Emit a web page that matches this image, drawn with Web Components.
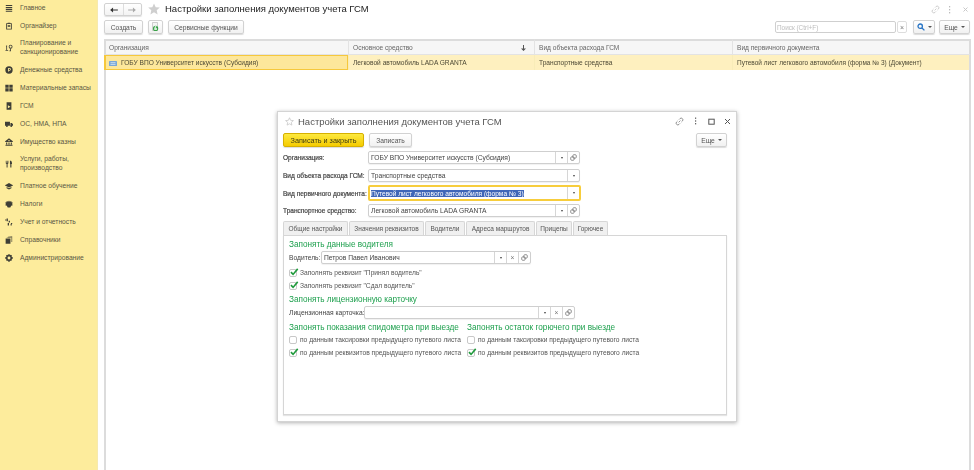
<!DOCTYPE html>
<html lang="ru">
<head>
<meta charset="utf-8">
<title>Настройки заполнения документов учета ГСМ</title>
<style>
    html, body { margin: 0; height: 100%; background: #fff; overflow: hidden; }
    body { font: 6.7px "Liberation Sans", Arial, sans-serif; color: #4a4a4a; }
</style>
</head>
<body>
<app-shell>
    <side-nav slot="nav">
        <nav-item icon="menu">Главное</nav-item>
        <nav-item icon="note">Органайзер</nav-item>
        <nav-item icon="plan" tall>Планирование и<br>санкционирование</nav-item>
        <nav-item icon="coin">Денежные средства</nav-item>
        <nav-item icon="grid">Материальные запасы</nav-item>
        <nav-item icon="fuel">ГСМ</nav-item>
        <nav-item icon="truck">ОС, НМА, НПА</nav-item>
        <nav-item icon="house">Имущество казны</nav-item>
        <nav-item icon="tools" tall>Услуги, работы,<br>производство</nav-item>
        <nav-item icon="cap">Платное обучение</nav-item>
        <nav-item icon="tax">Налоги</nav-item>
        <nav-item icon="report">Учет и отчетность</nav-item>
        <nav-item icon="books">Справочники</nav-item>
        <nav-item icon="gear">Администрирование</nav-item>
    </side-nav>
    <list-page slot="main"></list-page>
    <settings-dialog slot="main"></settings-dialog>
</app-shell>

<script>
const ICONS = {
    menu: '<path d="M1 1.2h8v1.4H1zM1 3.6h8V5H1zM1 6h8v1.4H1zM1 8.4h8v1.2H1z"/>',
    note: '<path fill-rule="evenodd" d="M1.5 1.5h7v8h-7zM2.6 2.6v5.8h4.8V2.6z"/><path d="M3.4 .8h3.2v1.4H3.4zM3.4 3.8h3.2v.8H3.4zM3.4 5.4h3.2v.8H3.4z"/>',
    plan: '<path d="M1 2.5l1.6-1v6H4v1H.6v-1h1V3z"/><path fill-rule="evenodd" d="M7 1a2.4 2.4 0 1 1 0 4.8A2.4 2.4 0 0 1 7 1zm0 1a1.4 1.4 0 1 0 0 2.8A1.4 1.4 0 0 0 7 2z"/><path d="M6.5 5.6h1V9h-2V8h1z"/>',
    coin: '<path fill-rule="evenodd" d="M5 .4a4.6 4.6 0 1 1 0 9.2A4.6 4.6 0 0 1 5 .4zM3.9 2.6V7H5V5.8h.7a1.6 1.6 0 0 0 0-3.2zM5 3.5h.6a.7.7 0 0 1 0 1.4H5z"/>',
    grid: '<path d="M.4.8h4.2v4H.4zM5.4.8h4.2v4H5.4zM.4 5.4h4.2v4H.4zM5.4 5.4h4.2v4H5.4z"/>',
    fuel: '<path fill-rule="evenodd" d="M2 .4h6v9.4H2zM3.6 4v3.8L6.8 6z"/>',
    truck: '<path d="M0 2.2h6.2v5H0zM6.8 3.6h1.8L10 5.4v1.8H6.8z"/><circle cx="2.4" cy="7.6" r="1.2"/><circle cx="7.8" cy="7.6" r="1.2"/>',
    house: '<path fill-rule="evenodd" d="M5 .4l4.8 3.6v1H.2V4zM5 2.4a.9.9 0 1 0 0 1.8.9.9 0 0 0 0-1.8z"/><path d="M1.4 5.6h1.4v2.4H1.4zM4.3 5.6h1.4v2.4H4.3zM7.2 5.6h1.4v2.4H7.2zM.6 8.4h8.8v1.2H.6z"/>',
    tools: '<path d="M1 .8h.7v2.6h.6V.8H3v2.6h.5V.8h.7v3.6l-1 .7v4.3H2V5.1l-1-.7zM6.2.8h1.2c1 .6 1.4 2 1.4 4.2H8v4.4H6.6V5H6.2z"/>',
    cap: '<path d="M5 1.4l5.4 2.8L5 7 -.4 4.2z"/><path d="M2 6.2L5 7.8l3-1.6v1.7L5 9.4 2 7.9z"/>',
    tax: '<path d="M5 .6l1 1.6 1.8-1 .3 1.6 1.6.3-.8 1.8.8 1.6-2 .7L6.6 9.4H3.4L2.3 7.2l-2-.7.8-1.6-.8-1.8 1.6-.3L2.2 1.2l1.8 1z"/>',
    report: '<path d="M2 .6h1.6v3.6H2zM.2 1.8h1.4v1.2H.2zM4.6 3.4h1.6v2.2H4.6zM3.4 6.2h1.6v3.2H3.4zM7.4 6.4H9v1.2H7.4zM7 7.6h1.4v1.8H7z"/>',
    books: '<path d="M3.6.8L9 .4v7l-1 .2V2H3.6z" opacity=".75"/><path d="M2.2 1.8h5v.8h-5z" opacity=".6"/><path d="M.8 3.2h6v6.4h-6z"/>',
    gear: '<path fill-rule="evenodd" d="M4.1.2h1.8l.3 1.4 1.2-.6 1.4 1.3-.7 1.2 1.6.5v1.9l-1.6.5.7 1.2-1.4 1.3-1.2-.7-.3 1.6H4.1l-.3-1.6-1.2.7-1.4-1.3.7-1.2L.3 5.9V4l1.6-.5-.7-1.2L2.6 1l1.2.6zM5 3.2a1.8 1.8 0 1 0 0 3.6 1.8 1.8 0 0 0 0-3.6z"/>'
};

class AppShell extends HTMLElement {
    constructor() {
        super();
        this.attachShadow({ mode: 'open' });
        this.shadowRoot.innerHTML = `
            <style>
                :host { display: grid; grid-template-columns: 98px 1fr; width: 974px; height: 470px; overflow: hidden; filter: blur(.4px); }
                .main { position: relative; padding-left: 6px; min-width: 0; }
            </style>
            <slot name="nav"></slot>
            <div class="main"><slot name="main"></slot></div>
        `;
    }
}

class SideNav extends HTMLElement {
    constructor() {
        super();
        this.attachShadow({ mode: 'open' });
        this.shadowRoot.innerHTML = `
            <style>
                :host { display: block; background: #fdec9c; border-right: 1px solid #f6e9ae; box-sizing: border-box; height: 470px; }
                .inner { display: flex; flex-direction: column; margin-top: -1px; }
            </style>
            <div class="inner"><slot></slot></div>
        `;
    }
}

class NavItem extends HTMLElement {
    constructor() {
        super();
        this.attachShadow({ mode: 'open' });
        const tall = this.hasAttribute('tall');
        const icon = ICONS[this.getAttribute('icon')] || '';
        this.shadowRoot.innerHTML = `
            <style>
                :host { display: flex; align-items: center; gap: 7px; height: ${tall ? 26 : 18}px; padding-left: 5px; color: #5a5744; font-size: 6.7px; line-height: 8.6px; white-space: nowrap; }
                svg { width: 8px; height: 8px; flex: none; fill: #3e3e36; }
            </style>
            <svg viewBox="0 0 10 10">${icon}</svg>
            <span><slot></slot></span>
        `;
    }
}

class FlatButton extends HTMLElement {
    constructor() {
        super();
        this.attachShadow({ mode: 'open' });
        this.shadowRoot.innerHTML = `
            <style>
                :host { display: inline-flex; align-items: center; justify-content: center; gap: 3px; flex: none; box-sizing: border-box; height: 14px; border: 1px solid #d2d2d2; border-radius: 2px; background: linear-gradient(#fff, #f1f1f1); box-shadow: 0 1px 1px rgba(0,0,0,.14); color: #555; font-size: 6.7px; white-space: nowrap; }
                :host([primary]) { background: linear-gradient(#fde93f, #f5cb00); border-color: #d6b000; color: #3f3a10; font-size: 7.25px; }
                :host([menu])::after { content: ""; border: 2px solid transparent; border-top: 2.5px solid #555; border-bottom: 0; }
            </style>
            <slot></slot>
        `;
    }
}

class ListPage extends HTMLElement {
    constructor() {
        super();
        this.attachShadow({ mode: 'open' });
        this.shadowRoot.innerHTML = `
            <style>
                :host { display: flex; flex-direction: column; height: 470px; box-sizing: border-box; }
                .head { display: flex; align-items: flex-start; height: 20px; padding-top: 3px; box-sizing: border-box; }
                .nav { display: flex; flex: none; width: 38px; height: 13px; border: 1px solid #d2d2d2; border-radius: 2px; box-sizing: border-box; background: linear-gradient(#fff, #f3f3f3); box-shadow: 0 1px 1px rgba(0,0,0,.12); }
                .nav span { flex: 1; display: flex; align-items: center; justify-content: center; }
                .nav span + span { border-left: 1px solid #ddd; }
                .star { flex: none; margin: 0 5px 0 6px; }
                h1 { margin: 0; flex: 1; font-size: 9.5px; line-height: 11px; font-weight: 400; color: #222; white-space: nowrap; }
                .win { display: flex; align-items: center; height: 12px; padding-right: 5px; }
                .win .dots { margin: 0 11px 0 8px; }
                .bar { display: flex; align-items: center; height: 14px; }
                .bar flat-button + flat-button { margin-left: 5px; }
                .spacer { flex: 1; }
                .search { display: flex; align-items: center; width: 121px; height: 12px; box-sizing: border-box; border: 1px solid #cfcfcf; border-radius: 2px; padding-left: 1px; color: #bdbdbd; font-size: 6.4px; }
                .clear { display: flex; align-items: center; justify-content: center; width: 10px; height: 12px; box-sizing: border-box; margin: 0 0 0 1px; border: 1px solid #ddd; border-radius: 2px; color: #777; font-size: 7px; }
                .bar .find { width: 22px; margin-left: 6px; }
                .bar .more { width: 31px; margin: 0 4px 0 4px; }
                table { border-collapse: separate; border-spacing: 0; table-layout: fixed; width: 867px; margin-top: 5px; font-size: 6.6px; }
                th { height: 16px; box-sizing: border-box; padding: 0 0 0 4px; background: #f6f6f6; border-top: 2px solid #dcdcdc; border-left: 1px solid #e3e3e3; border-bottom: 1px solid #e3e3e3; font-weight: 400; color: #666; text-align: left; white-space: nowrap; }
                th:first-child { border-left: 2px solid #dcdcdc; padding-left: 3px; }
                th:last-child, td:last-child { border-right: 2px solid #dcdcdc; }
                td { height: 15px; box-sizing: border-box; padding: 0 0 0 4px; background: #fef0bf; border-left: 1px solid #f8ecb8; color: #4d4935; white-space: nowrap; }
                td:first-child { background: #fde79b; border: 1px solid #f6c83c; border-left-width: 2px; padding-left: 3px; }
                th .sort { float: right; margin: 1px 8px 0 0; }
                td svg { vertical-align: -1px; margin-right: 4px; }
                .tail { flex: 1; width: 867px; box-sizing: border-box; border-left: 2px solid #dcdcdc; border-right: 2px solid #dcdcdc; }
            </style>
            <div class="head">
                <div class="nav">
                    <span><svg width="8" height="6" viewBox="0 0 9 7"><path d="M0 3.5L3.4.6v2.2H9v1.4H3.4v2.2z" fill="#333"/></svg></span>
                    <span><svg width="8" height="6" viewBox="0 0 9 7"><path d="M9 3.5L5.6.6v2.2H0v1.4h5.6v2.2z" fill="#aaa"/></svg></span>
                </div>
                <svg class="star" width="12" height="12" viewBox="0 0 12 12"><path d="M6 .4l1.7 3.8 4.1.4-3.1 2.7.9 4.1L6 9.3l-3.6 2.1.9-4.1L.2 4.6l4.1-.4z" fill="#cfcfcf"/></svg>
                <h1>Настройки заполнения документов учета ГСМ</h1>
                <div class="win">
                    <svg width="9" height="9" viewBox="0 0 10 10" fill="none" stroke="#c8c8c8"><path d="M4 6l2-2M4.5 2.8l1-1a1.8 1.8 0 0 1 2.7 2.7l-1 1M5.5 7.2l-1 1a1.8 1.8 0 0 1-2.7-2.7l1-1"/></svg>
                    <svg class="dots" width="3" height="9" viewBox="0 0 3 9" fill="#bbb"><rect x="1" y="1" width="1.2" height="1.4"/><rect x="1" y="4" width="1.2" height="1.4"/><rect x="1" y="7" width="1.2" height="1.4"/></svg>
                    <svg width="7" height="7" viewBox="0 0 7 7" stroke="#c8c8c8"><path d="M1.5 1.5l4 4M5.5 1.5l-4 4"/></svg>
                </div>
            </div>
            <div class="bar">
                <flat-button style="width:39px">Создать</flat-button>
                <flat-button style="width:15px">
                    <svg width="9" height="10" viewBox="0 0 9 10"><path d="M1.5.5h5v8h-5z" fill="#f5f5f5" stroke="#bbb" stroke-width=".7"/><circle cx="4.6" cy="6.4" r="2.6" fill="#2f9e3f"/><path d="M3.4 6.2h2.4v1.5H3.4zM3.8 6.2V5a.8.8 0 0 1 1.6 0" fill="#fff" stroke="#fff" stroke-width=".3"/></svg>
                </flat-button>
                <flat-button style="width:76px">Сервисные функции</flat-button>
                <span class="spacer"></span>
                <div class="search">Поиск (Ctrl+F)</div>
                <div class="clear">×</div>
                <flat-button class="find" menu>
                    <svg width="8" height="8" viewBox="0 0 8 8" fill="none" stroke="#2a76c6" stroke-width="1.3"><circle cx="3.2" cy="3.2" r="2.2"/><path d="M5 5l2.4 2.4"/></svg>
                </flat-button>
                <flat-button class="more" menu>Еще</flat-button>
            </div>
            <table>
                <colgroup><col style="width:244px"><col style="width:186px"><col style="width:198px"><col></colgroup>
                <tr>
                    <th>Организация</th>
                    <th>Основное средство<span class="sort"><svg width="5" height="6" viewBox="0 0 5 6"><path d="M2 0h1v3.4h2L2.5 6 0 3.4h2z" fill="#555"/></svg></span></th>
                    <th>Вид объекта расхода ГСМ</th>
                    <th>Вид первичного документа</th>
                </tr>
                <tr>
                    <td><svg width="8" height="5" viewBox="0 0 8 5"><rect width="8" height="5" rx=".6" fill="#7aa7d6"/><path d="M1.5 1.7h5M1.5 3.4h5" stroke="#e8f1fa" stroke-width=".7"/></svg>ГОБУ ВПО Университет искусств (Субсидия)</td>
                    <td>Легковой автомобиль LADA GRANTA</td>
                    <td>Транспортные средства</td>
                    <td style="font-size:6.47px">Путевой лист легкового автомобиля (форма № 3) (Документ)</td>
                </tr>
            </table>
            <div class="tail"></div>
        `;
    }
}

class FormField extends HTMLElement {
    constructor() {
        super();
        this.attachShadow({ mode: 'open' });
        const drop = '<span class="cell"><i class="tri"></i></span>';
        const clear = '<span class="cell x">×</span>';
        const link = '<span class="cell"><svg width="7" height="7" viewBox="0 0 10 10" fill="none" stroke="#777" stroke-width="1.1"><rect x="1" y="4" width="5" height="5" rx="1.6"/><rect x="4" y="1" width="5" height="5" rx="1.6"/></svg></span>';
        const buttons = (this.getAttribute('buttons') || '').split('').map(c => ({ d: drop, x: clear, l: link }[c])).join('');
        const value = this.getAttribute('value') || '';
        this.shadowRoot.innerHTML = `
            <style>
                :host { display: flex; align-items: center; font-size: 6.7px; }
                label { flex: none; width: var(--label-width, 85px); color: var(--label-color, #444); -webkit-text-stroke: var(--label-stroke, 0); font-size: var(--label-size, 6.7px); white-space: nowrap; }
                .box { display: flex; align-items: stretch; flex: none; box-sizing: border-box; width: var(--box-width, 212px); height: var(--box-height, 13px); border: 1px solid #cfcfcf; border-radius: 2px; background: #fff; box-shadow: 0 1px 1px rgba(0,0,0,.06); }
                :host([focused]) .box { border: 2px solid #f7cd3c; box-shadow: none; }
                .val { flex: 1; display: flex; align-items: center; padding-left: 2px; min-width: 0; color: #444; white-space: nowrap; }
                :host([focused]) .val { padding-left: 1px; font-size: 6.6px; }
                mark { background: #3f66b8; color: #fff; }
                .cell { flex: none; display: flex; align-items: center; justify-content: center; width: 11px; border-left: 1px solid #d6d6d6; color: #777; }
                .tri { border: 1.5px solid transparent; border-top: 2px solid #444; border-bottom: 0; }
            </style>
            <label>${this.getAttribute('label') || ''}</label>
            <div class="box">
                <span class="val">${this.hasAttribute('focused') ? `<mark>${value}</mark>` : value}</span>
                ${buttons}
            </div>
        `;
    }
}

class CheckRow extends HTMLElement {
    constructor() {
        super();
        this.attachShadow({ mode: 'open' });
        this.shadowRoot.innerHTML = `
            <style>
                :host { display: flex; align-items: center; gap: 3px; height: 13px; font-size: 6.65px; color: #555; white-space: nowrap; }
                .mark { position: relative; flex: none; width: 8px; height: 8px; box-sizing: border-box; border: 1px solid #c8c8c8; border-radius: 2px; background: #fff; }
                svg { position: absolute; left: 0; top: -2px; display: none; }
                :host([checked]) svg { display: block; }
            </style>
            <span class="mark"><svg width="9" height="8" viewBox="0 0 10 9"><path d="M1 4.6l2.4 2.6L8.6 1" fill="none" stroke="#1f9a3c" stroke-width="1.8"/></svg></span>
            <slot></slot>
        `;
    }
}

class GroupTitle extends HTMLElement {
    constructor() {
        super();
        this.attachShadow({ mode: 'open' });
        this.shadowRoot.innerHTML = `
            <style>
                :host { display: block; color: #1ea04e; font-size: 8.2px; line-height: 10px; white-space: nowrap; }
            </style>
            <slot></slot>
        `;
    }
}

class TabBar extends HTMLElement {
    constructor() {
        super();
        this.attachShadow({ mode: 'open' });
        const tabs = [
            ['Общие настройки', 65], ['Значения реквизитов', 75], ['Водители', 40],
            ['Адреса маршрутов', 69], ['Прицепы', 36], ['Горючее', 35]
        ];
        this.shadowRoot.innerHTML = `
            <style>
                :host { display: flex; gap: 1px; height: 15px; font-size: 6.5px; color: #555; position: relative; z-index: 1; }
                span { display: flex; align-items: center; justify-content: center; box-sizing: border-box; border: 1px solid #d6d6d6; border-bottom: 0; border-radius: 2px 2px 0 0; background: #f0f0f0; white-space: nowrap; height: 14px; }
                span:first-child { background: #fff; height: 15px; }
            </style>
            ${tabs.map(([name, width]) => `<span style="width:${width}px">${name}</span>`).join('')}
        `;
    }
}

class SettingsDialog extends HTMLElement {
    constructor() {
        super();
        this.attachShadow({ mode: 'open' });
        this.shadowRoot.innerHTML = `
            <style>
                :host { position: absolute; left: 179px; top: 111px; display: block; width: 460px; height: 311px; box-sizing: border-box; padding: 0 5px; background: #fff; border: 1px solid #d4d4d4; box-shadow: 0 1px 4px rgba(0,0,0,.3); }
                .title { display: flex; align-items: center; height: 20px; padding-bottom: 2px; box-sizing: border-box; }
                .title .star { flex: none; margin: 0 4px 0 2px; }
                h2 { flex: 1; margin: 0; font-size: 9.5px; font-weight: 400; color: #555; white-space: nowrap; }
                .win { display: flex; align-items: center; margin-right: -4px; }
                .win span { display: flex; align-items: center; justify-content: center; width: 16px; }
                .actions { display: flex; align-items: center; height: 14px; margin-top: 1px; }
                .actions flat-button + flat-button { margin-left: 5px; }
                .actions .more { margin-left: auto; margin-right: 4px; width: 31px; }
                .fields { display: flex; flex-direction: column; margin-top: 4px; --label-stroke: .2px; --label-size: 6.55px; --label-color: #444; }
                .tabs { margin-top: 4px; }
                .panel { box-sizing: border-box; width: 444px; height: 180px; margin-top: -1px; padding: 4px 5px; border: 1px solid #d6d6d6; box-shadow: 0 1px 1px rgba(0,0,0,.1); }
                .driver { --label-width: 32px; --box-width: 210px; margin-top: 1px; }
                .card { --label-width: 75px; --box-width: 211px; margin-top: 1px; }
                .cols { display: grid; grid-template-columns: 178px 1fr; margin-top: 4px; }
            </style>
            <div class="title">
                <svg class="star" width="9" height="9" viewBox="0 0 12 12"><path d="M6 1l1.5 3.4 3.7.4-2.8 2.4.8 3.6L6 9l-3.2 1.8.8-3.6L.8 4.8l3.7-.4z" fill="none" stroke="#c4c4c4"/></svg>
                <h2>Настройки заполнения документов учета ГСМ</h2>
                <div class="win">
                    <span><svg width="9" height="9" viewBox="0 0 10 10" fill="none" stroke="#888"><path d="M4 6l2-2M4.5 2.8l1-1a1.8 1.8 0 0 1 2.7 2.7l-1 1M5.5 7.2l-1 1a1.8 1.8 0 0 1-2.7-2.7l1-1"/></svg></span>
                    <span><svg width="3" height="8" viewBox="0 0 3 8" fill="#666"><rect x="1" y=".5" width="1.2" height="1.4"/><rect x="1" y="3.3" width="1.2" height="1.4"/><rect x="1" y="6" width="1.2" height="1.4"/></svg></span>
                    <span><svg width="7" height="7" viewBox="0 0 7 7" fill="none" stroke="#555"><rect x=".8" y="1.2" width="5.4" height="5"/></svg></span>
                    <span><svg width="7" height="7" viewBox="0 0 7 7" stroke="#555"><path d="M1 1l5 5M6 1L1 6"/></svg></span>
                </div>
            </div>
            <div class="actions">
                <flat-button primary style="width:81px">Записать и закрыть</flat-button>
                <flat-button style="width:43px">Записать</flat-button>
                <flat-button class="more" menu>Еще</flat-button>
            </div>
            <div class="fields">
                <form-field label="Организация:" value="ГОБУ ВПО Университет искусств (Субсидия)" buttons="dl"></form-field>
                <form-field style="margin-top:5px" label="Вид объекта расхода ГСМ:" value="Транспортные средства" buttons="d"></form-field>
                <form-field style="margin-top:3px;--box-width:213px;--box-height:16px" focused label="Вид первичного документа:" value="Путевой лист легкового автомобиля (форма № 3)" buttons="d"></form-field>
                <form-field style="margin-top:3px" label="Транспортное средство:" value="Легковой автомобиль LADA GRANTA" buttons="dl"></form-field>
            </div>
            <tab-bar class="tabs"></tab-bar>
            <div class="panel">
                <group-title>Запонять данные водителя</group-title>
                <form-field class="driver" label="Водитель:" value="Петров Павел Иванович" buttons="dxl"></form-field>
                <check-row style="margin-top:2px" checked>Заполнять реквизит "Принял водитель"</check-row>
                <check-row checked>Заполнять реквизит "Сдал водитель"</check-row>
                <group-title style="margin-top:3px">Запонять лицензионную карточку</group-title>
                <form-field class="card" label="Лицензионная карточка:" buttons="dxl"></form-field>
                <div class="cols">
                    <div>
                        <group-title>Запонять показания спидометра при выезде</group-title>
                        <check-row>по данным таксировки предыдущего путевого листа</check-row>
                        <check-row checked>по данным реквизитов предыдущего путевого листа</check-row>
                    </div>
                    <div>
                        <group-title>Запонять остаток горючего при выезде</group-title>
                        <check-row>по данным таксировки предыдущего путевого листа</check-row>
                        <check-row checked>по данным реквизитов предыдущего путевого листа</check-row>
                    </div>
                </div>
            </div>
        `;
    }
}

customElements.define('app-shell', AppShell);
customElements.define('side-nav', SideNav);
customElements.define('nav-item', NavItem);
customElements.define('flat-button', FlatButton);
customElements.define('list-page', ListPage);
customElements.define('form-field', FormField);
customElements.define('check-row', CheckRow);
customElements.define('group-title', GroupTitle);
customElements.define('tab-bar', TabBar);
customElements.define('settings-dialog', SettingsDialog);
</script>
</body>
</html>
